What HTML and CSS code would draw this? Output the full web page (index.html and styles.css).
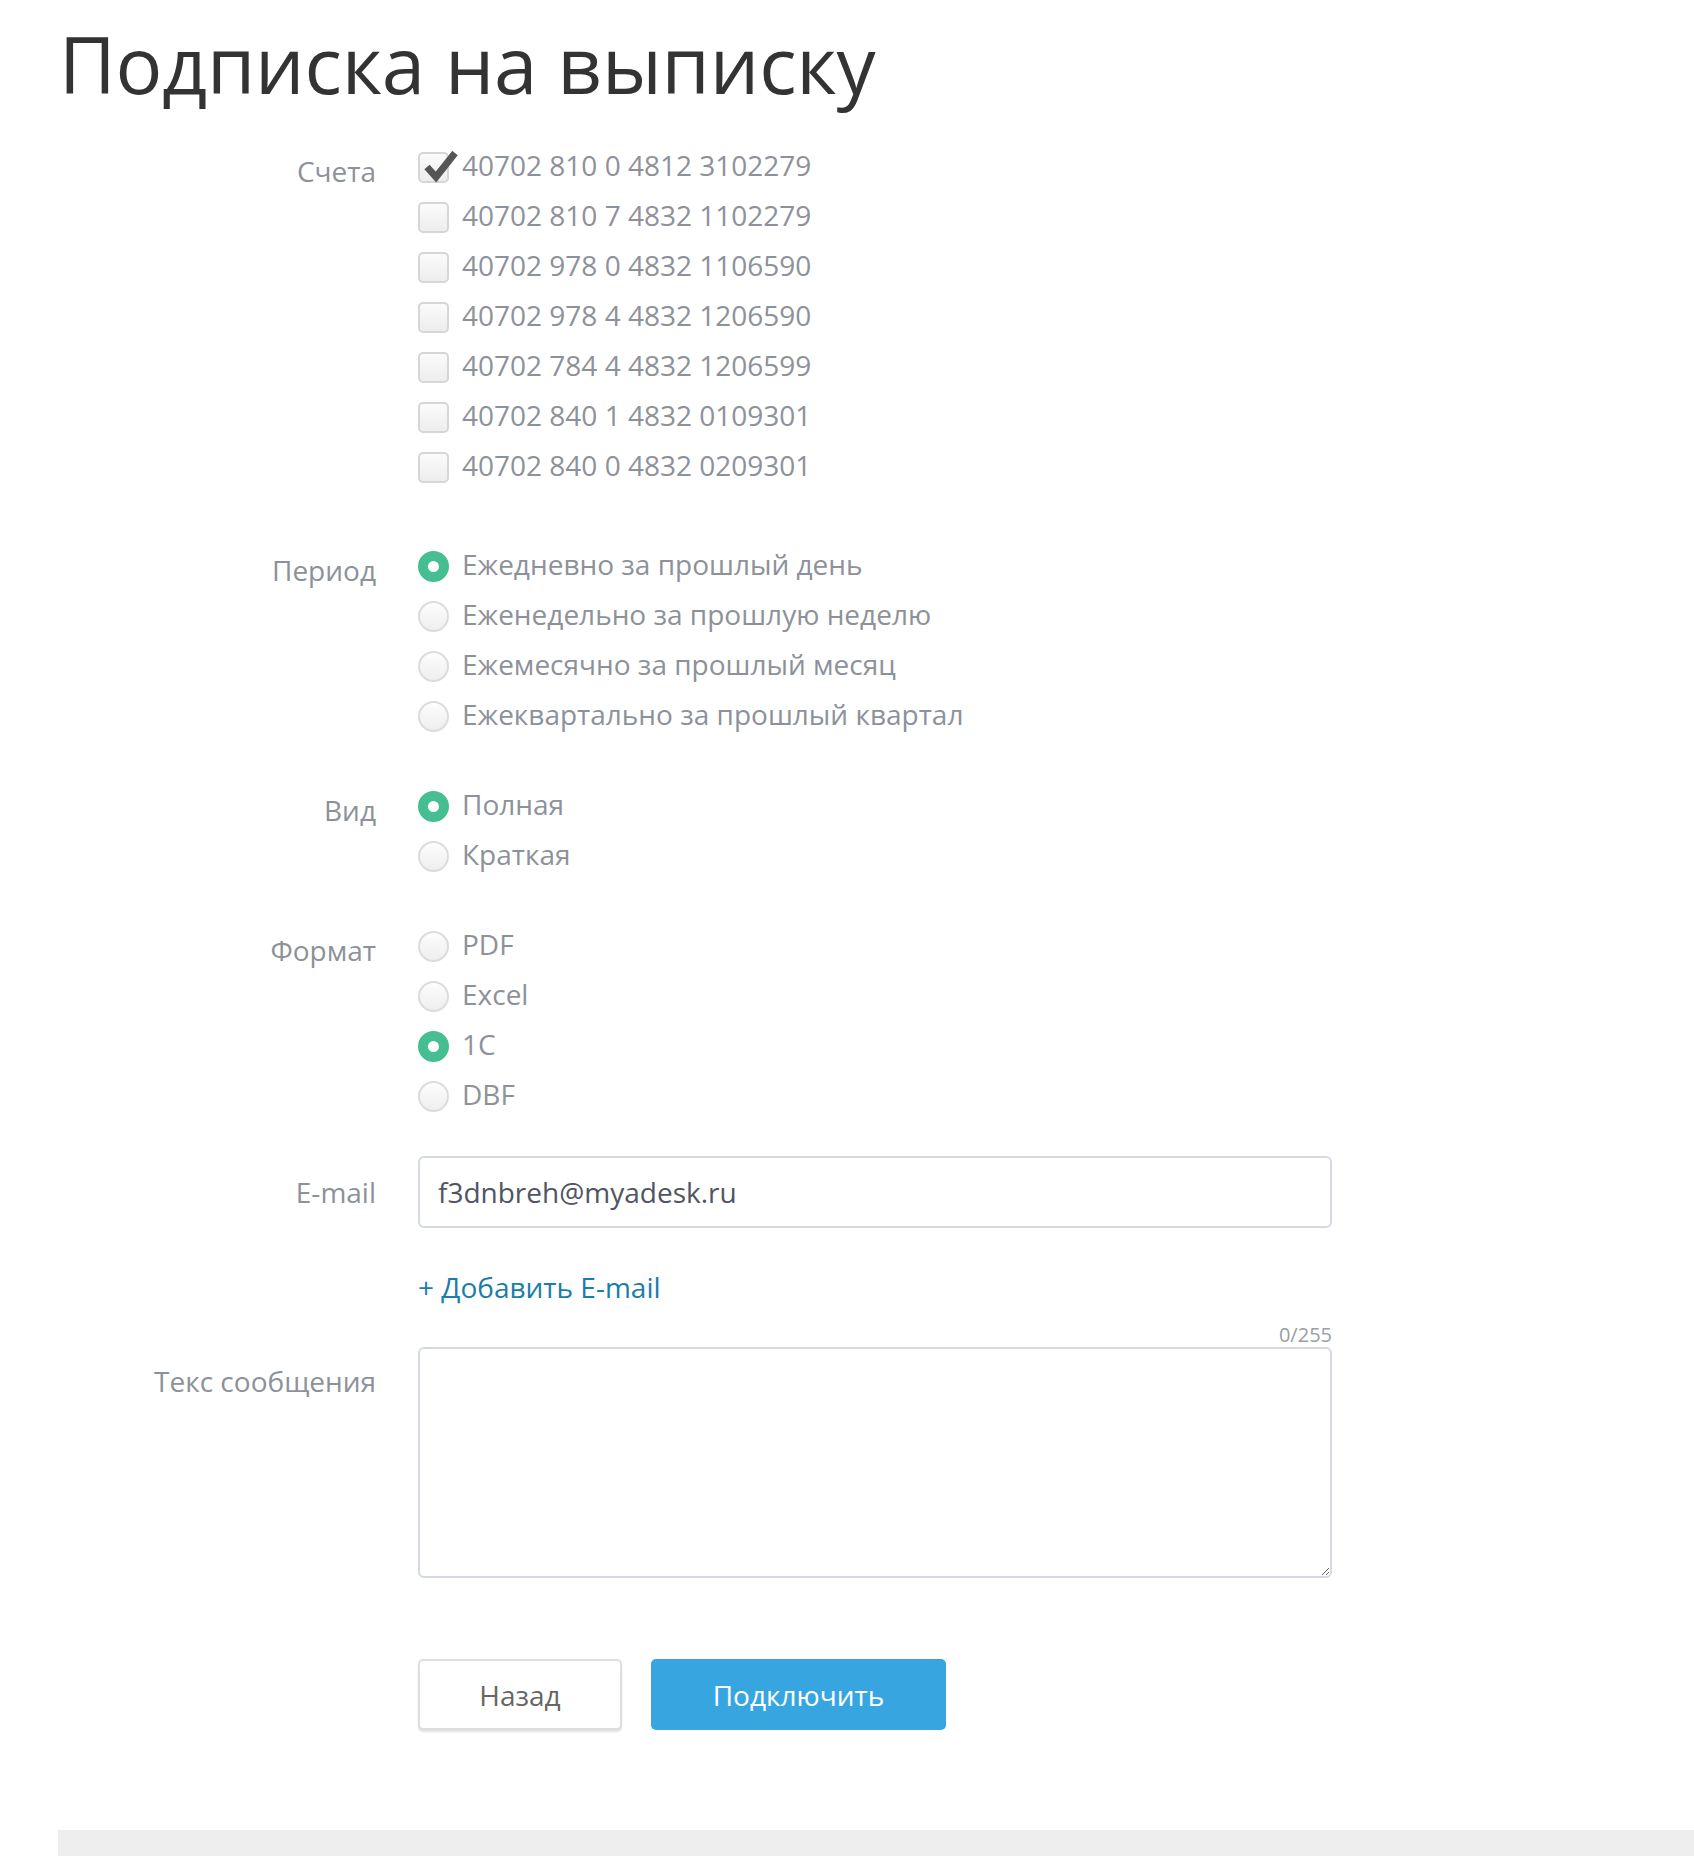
FILE: index.html
```html
<!DOCTYPE html>
<html lang="ru">
<head>
<meta charset="utf-8">
<title>Подписка на выписку</title>
<link rel="stylesheet" href="styles.css">
</head>
<body>
<div class="page">
  <h1 class="title">Подписка на выписку</h1>

  <form class="form">
    <div class="field field-accounts">
      <div class="label">Счета</div>
      <div class="options">
        <label class="opt"><span class="cb checked"><svg class="tick" viewBox="0 0 40 32" width="40" height="32"><path d="M7 16 L16 26 L35 2" fill="none" stroke="#555" stroke-width="7" stroke-linejoin="miter" stroke-linecap="butt"/></svg></span><span class="txt">40702 810 0 4812 3102279</span></label>
        <label class="opt"><span class="cb"></span><span class="txt">40702 810 7 4832 1102279</span></label>
        <label class="opt"><span class="cb"></span><span class="txt">40702 978 0 4832 1106590</span></label>
        <label class="opt"><span class="cb"></span><span class="txt">40702 978 4 4832 1206590</span></label>
        <label class="opt"><span class="cb"></span><span class="txt">40702 784 4 4832 1206599</span></label>
        <label class="opt"><span class="cb"></span><span class="txt">40702 840 1 4832 0109301</span></label>
        <label class="opt"><span class="cb"></span><span class="txt">40702 840 0 4832 0209301</span></label>
      </div>
    </div>

    <div class="field">
      <div class="label">Период</div>
      <div class="options">
        <label class="opt"><span class="rb checked"></span><span class="txt">Ежедневно за прошлый день</span></label>
        <label class="opt"><span class="rb"></span><span class="txt">Еженедельно за прошлую неделю</span></label>
        <label class="opt"><span class="rb"></span><span class="txt">Ежемесячно за прошлый месяц</span></label>
        <label class="opt"><span class="rb"></span><span class="txt">Ежеквартально за прошлый квартал</span></label>
      </div>
    </div>

    <div class="field">
      <div class="label">Вид</div>
      <div class="options">
        <label class="opt"><span class="rb checked"></span><span class="txt">Полная</span></label>
        <label class="opt"><span class="rb"></span><span class="txt">Краткая</span></label>
      </div>
    </div>

    <div class="field">
      <div class="label">Формат</div>
      <div class="options">
        <label class="opt"><span class="rb"></span><span class="txt">PDF</span></label>
        <label class="opt"><span class="rb"></span><span class="txt">Excel</span></label>
        <label class="opt"><span class="rb checked"></span><span class="txt">1С</span></label>
        <label class="opt"><span class="rb"></span><span class="txt">DBF</span></label>
      </div>
    </div>

    <div class="field field-email">
      <div class="label label-input">E-mail</div>
      <div class="control">
        <input class="input" type="text" value="f3dnbreh@myadesk.ru">
      </div>
    </div>

    <div class="field field-add">
      <div class="label"></div>
      <div class="control"><a class="add-link" href="#">+ Добавить E-mail</a></div>
    </div>

    <div class="field field-msg">
      <div class="label label-msg">Текс сообщения</div>
      <div class="control">
        <div class="counter">0/255</div>
        <textarea class="textarea"></textarea>
      </div>
    </div>

    <div class="field field-buttons">
      <div class="label"></div>
      <div class="buttons">
        <button type="button" class="btn btn-back">Назад</button>
        <button type="button" class="btn btn-primary">Подключить</button>
      </div>
    </div>
  </form>
</div>
<div class="footer-bar"></div>
</body>
</html>
```

FILE: styles.css
```css
* { box-sizing: border-box; }

html, body {
  margin: 0;
  padding: 0;
  background: #fff;
}

body {
  font-family: "Open Sans", "Liberation Sans", sans-serif;
  color: #8d919a;
}

.page {
  padding-top: 14px;
}

.title {
  margin: 0 0 26px 59px;
  font-size: 78px;
  line-height: 100px;
  font-weight: 400;
  color: #333;
  letter-spacing: -0.2px;
}

.form {
  display: flex;
  flex-direction: column;
}

.field {
  display: grid;
  grid-template-columns: 376px 914px;
  column-gap: 42px;
  margin-bottom: 40px;
}

.field-accounts {
  margin-bottom: 49px;
}

.label {
  font-size: 28px;
  line-height: 50px;
  padding-top: 6px;
  text-align: right;
  color: #8d919a;
}

.options {
  display: flex;
  flex-direction: column;
}

.opt {
  display: flex;
  align-items: center;
  height: 50px;
  font-size: 28px;
  line-height: 50px;
  color: #8d919a;
}

.txt {
  margin-left: 13px;
}

.cb {
  position: relative;
  width: 31px;
  height: 31px;
  flex: none;
  margin-top: 4px;
  border: 2px solid #d6d6d6;
  border-radius: 5px;
  background: linear-gradient(#fbfbfb, #ededed);
}

.tick {
  position: absolute;
  left: 0;
  top: -3px;
}

.rb {
  width: 31px;
  height: 31px;
  flex: none;
  margin-top: 4px;
  border: 2px solid #dcdcdc;
  border-radius: 50%;
  background: linear-gradient(#fdfdfd, #eeeeee);
}

.rb.checked {
  border: 10px solid #45bf91;
  background: #fff;
}

.field-email {
  margin-top: -3px;
  margin-bottom: 34px;
}

.label-input {
  padding-top: 11px;
}

.input {
  display: block;
  width: 914px;
  height: 72px;
  margin: 0;
  padding: 0 18px;
  border: 2px solid #d5d9e1;
  border-radius: 6px;
  font-family: "Open Sans", "Liberation Sans", sans-serif;
  font-size: 28px;
  color: #4f5563;
  background: #fff;
  outline: none;
}

.field-add {
  margin-bottom: 12px;
}

.add-link {
  display: block;
  font-size: 28px;
  line-height: 50px;
  color: #1a7daa;
  text-decoration: none;
}

.field-msg {
  margin-bottom: 81px;
}

.label-msg {
  padding-top: 32px;
}

.counter {
  text-align: right;
  font-size: 20px;
  line-height: 22px;
  height: 22px;
  color: #9a9ea6;
  margin-bottom: 1px;
}

.textarea {
  display: block;
  width: 914px;
  height: 231px;
  margin: 0;
  padding: 12px 18px;
  border: 2px solid #d5d9e1;
  border-radius: 6px;
  font-family: "Open Sans", "Liberation Sans", sans-serif;
  font-size: 28px;
  resize: vertical;
  outline: none;
  background: #fff;
}

.field-buttons {
  margin-bottom: 0;
}

.buttons {
  display: flex;
  gap: 29px;
}

.btn {
  height: 71px;
  margin: 0;
  border-radius: 5px;
  font-family: "Open Sans", "Liberation Sans", sans-serif;
  font-size: 28px;
  cursor: pointer;
}

.btn-back {
  width: 204px;
  border: 2px solid #dedede;
  background: #fff;
  color: #666;
  box-shadow: 0 2px 2px rgba(0, 0, 0, 0.12);
}

.btn-primary {
  width: 295px;
  border: none;
  background: #37a6e0;
  color: #fff;
}

.footer-bar {
  margin: 100px 0 0 58px;
  height: 60px;
  background: #eeeeee;
}
```
